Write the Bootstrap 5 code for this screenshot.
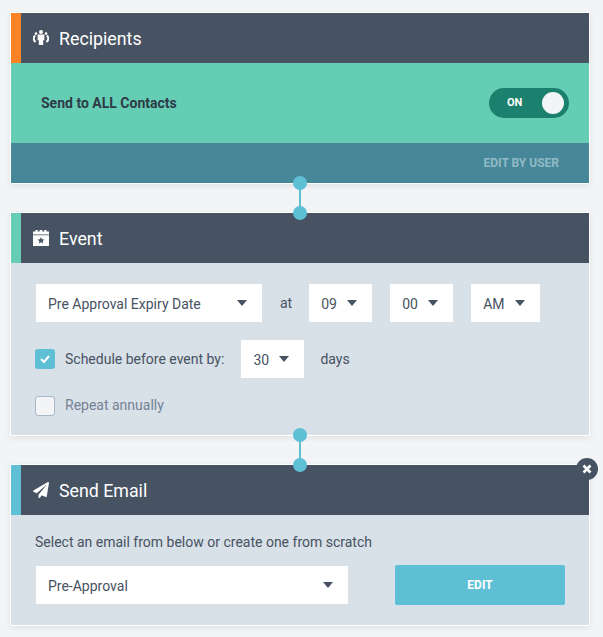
<!DOCTYPE html>
<html lang="en">

<head>
	<meta charset="UTF-8">
	<title>Workflow Steps</title>
	<link href="https://cdn.jsdelivr.net/npm/bootstrap@5.3.3/dist/css/bootstrap.min.css" rel="stylesheet">
	<style>
		body {
			background-color: #f3f4f6;
			font-family: Roboto, "Liberation Sans", sans-serif;
			font-size: 14px;
			color: #475262;
		}

		.flow-wrap {
			width: 580px;
			margin: 12px 0 0 10px;
		}

		.step-box {
			position: relative;
			border: 1px solid #fff;
			box-shadow: 0 2px 6px rgba(0, 0, 0, 0.08);
			margin-bottom: 28px;
		}

		.step-head {
			height: 50px;
			background-color: #475262;
			color: #fff;
			font-size: 17.8px;
			border-left: 10px solid;
			padding-left: 12px;
			gap: 10px;
		}

		.step-head span {
			margin-top: 1px;
			line-height: 24px;
			height: 24px;
		}

		.step-head svg {
			width: 16px;
			height: 16px;
			fill: #fff;
		}

		.accent-orange { border-left-color: #f98324; }
		.accent-green { border-left-color: #66cdb5; }
		.accent-blue { border-left-color: #5fbfd5; }

		.all-row {
			height: 80px;
			background-color: #66cdb5;
			padding: 0 20px 0 30px;
			color: #2d3b47;
			font-weight: 700;
			font-size: 14px;
		}

		.on-switch {
			width: 80px;
			height: 30px;
			border-radius: 15px;
			background-color: #1c806e;
			color: #fff;
			font-size: 11px;
			font-weight: 700;
			padding: 0 5px 0 18px;
		}

		.on-knob {
			width: 22px;
			height: 22px;
			border-radius: 50%;
			background-color: #f3f4f6;
		}

		.edit-user {
			height: 40px;
			background-color: #468899;
			color: #92bac5;
			font-size: 12px;
			font-weight: 700;
			padding-right: 30px;
		}

		.step-body {
			background-color: #d8e0e8;
		}

		.event-body {
			height: 172px;
			padding: 21px 0 0 24px;
		}

		.mail-body {
			height: 110px;
			padding: 17px 0 0 24px;
		}

		.pick {
			height: 38px;
			background-color: #fff;
			border: 0;
			border-radius: 0;
			padding: 2px 15px 0 12px;
			font-size: 14px;
			color: #475262;
			display: flex;
			align-items: center;
			justify-content: space-between;
		}

		.pick:hover, .pick:active {
			background-color: #fff;
			color: #475262;
		}

		.pick.dropdown-toggle::after {
			margin: -2px 0 0;
			border-top: 6px solid #475262;
			border-left: 5px solid transparent;
			border-right: 5px solid transparent;
			border-bottom: 0;
		}

		.w-date { width: 226px; margin: 0 18px 0 1px; }
		.w-small { width: 63px; }
		.w-ampm { width: 69px; }
		.w-mail { width: 312px; margin-left: 1px; }
		.at-word { margin-right: 17px; }
		.gap-after { margin-right: 18px; }
		.sched-row { margin-top: 18px; }
		.repeat-row { margin-top: 17px; }
		.after-tick { margin-left: 10px; }
		.after-pick { margin-left: 17px; }
		.days-word { margin-left: 16px; }
		.mail-row { margin-top: 12px; }

		.tick-box {
			width: 20px;
			height: 20px;
			border-radius: 3px;
			flex-shrink: 0;
		}

		.tick-on { background-color: #5fbfd5; }
		.tick-off { background-color: #f3f4f6; border: 1px solid #a9b7cb; }

		.muted-label { color: #758295; }

		.edit-btn {
			width: 170px;
			height: 40px;
			margin-left: 47px;
			background-color: #5fbfd5;
			border: 0;
			border-radius: 2px;
			color: #fff;
			font-size: 12px;
			font-weight: 700;
		}

		.edit-btn:hover { background-color: #5fbfd5; color: #fff; }

		.link-line {
			position: absolute;
			left: 282px;
			width: 14px;
			height: 44px;
			z-index: 2;
		}

		.link-line::before {
			content: "";
			position: absolute;
			left: 6px;
			top: 7px;
			width: 2px;
			height: 30px;
			background-color: #5fbfd5;
		}

		.link-dot {
			position: absolute;
			left: 0;
			width: 14px;
			height: 14px;
			border-radius: 50%;
			background-color: #5fbfd5;
		}

		.close-dot {
			position: absolute;
			right: -9px;
			top: -7px;
			width: 22px;
			height: 22px;
			border-radius: 50%;
			background-color: #475262;
			z-index: 2;
		}
	</style>
</head>

<body>
	<div class="flow-wrap">
		<div class="step-box">
			<div class="step-head accent-orange d-flex align-items-center">
				<svg viewBox="0 0 16 16"><circle cx="8" cy="2" r="2"/><path d="M4.6 4.6h6.8v5.6h-1.2V15H5.8v-4.8H4.6z"/><circle cx="3" cy="3.6" r="1.3"/><circle cx="13" cy="3.6" r="1.3"/><path d="M2.2 5.6C.2 7.4.2 10.2 2.6 12M13.8 5.6c2 1.8 2 4.6-.4 6.4" fill="none" stroke="#fff" stroke-width="2"/></svg>
				<span>Recipients</span>
			</div>
			<div class="all-row d-flex align-items-center justify-content-between">
				<span>Send to ALL Contacts</span>
				<div class="on-switch d-flex align-items-center justify-content-between">
					<span>ON</span>
					<span class="on-knob"></span>
				</div>
			</div>
			<div class="edit-user d-flex align-items-center justify-content-end">EDIT BY USER</div>
			<div class="link-line" style="top: 163px"><span class="link-dot" style="top: 0"></span><span class="link-dot" style="top: 30px"></span></div>
		</div>

		<div class="step-box">
			<div class="step-head accent-green d-flex align-items-center">
				<svg viewBox="0 0 16 16"><path d="M0 1.5h2.5V0h2.2v1.5h1.9V0h2.8v1.5h1.9V0h2.2v1.5H16v3H0z"/><path d="M0 5.2h16V16H0zM8 7l-1 2.3-2.5.2 1.9 1.7-.6 2.4L8 12.3l2.2 1.3-.6-2.4 1.9-1.7L9 9.3z" fill-rule="evenodd"/></svg>
				<span>Event</span>
			</div>
			<div class="step-body event-body">
				<div class="d-flex align-items-center">
					<button type="button" class="btn dropdown-toggle pick w-date">Pre Approval Expiry Date</button>
					<span class="at-word">at</span>
					<button type="button" class="btn dropdown-toggle pick w-small gap-after">09</button>
					<button type="button" class="btn dropdown-toggle pick w-small gap-after">00</button>
					<button type="button" class="btn dropdown-toggle pick w-ampm">AM</button>
				</div>
				<div class="d-flex align-items-center sched-row">
					<span class="tick-box tick-on d-flex align-items-center justify-content-center">
						<svg width="10" height="8" viewBox="0 0 10 8"><path d="M1 4l3 3 5-6" fill="none" stroke="#fff" stroke-width="2"/></svg>
					</span>
					<span class="after-tick">Schedule before event by:</span>
					<button type="button" class="btn dropdown-toggle pick w-small after-pick">30</button>
					<span class="days-word">days</span>
				</div>
				<div class="d-flex align-items-center repeat-row">
					<span class="tick-box tick-off"></span>
					<span class="after-tick muted-label">Repeat annually</span>
				</div>
			</div>
			<div class="link-line" style="top: 215px"><span class="link-dot" style="top: 0"></span><span class="link-dot" style="top: 30px"></span></div>
		</div>

		<div class="step-box">
			<span class="close-dot d-flex align-items-center justify-content-center">
				<svg width="10" height="10" viewBox="0 0 10 10"><path d="M1.5 1.5l7 7M8.5 1.5l-7 7" stroke="#fff" stroke-width="2.6"/></svg>
			</span>
			<div class="step-head accent-blue d-flex align-items-center">
				<svg viewBox="0 0 512 512"><path d="M476 3.2L12.5 270.6c-18.1 10.4-15.8 35.6 2.2 43.2L121 358.4l287.3-253.2c5.5-4.9 13.3 2.6 8.6 8.3L176 407v80.5c0 23.6 28.5 32.9 42.5 15.8L282 426l124.6 52.2c14.2 6 30.4-2.9 33-18.2l72-432C515 7.8 493.3-6.8 476 3.2z"/></svg>
				<span>Send Email</span>
			</div>
			<div class="step-body mail-body">
				<div>Select an email from below or create one from scratch</div>
				<div class="d-flex align-items-center mail-row">
					<button type="button" class="btn dropdown-toggle pick w-mail">Pre-Approval</button>
					<button type="button" class="btn edit-btn">EDIT</button>
				</div>
			</div>
		</div>
	</div>

	<script src="https://cdn.jsdelivr.net/npm/bootstrap@5.3.3/dist/js/bootstrap.bundle.min.js"></script>
</body>

</html>
